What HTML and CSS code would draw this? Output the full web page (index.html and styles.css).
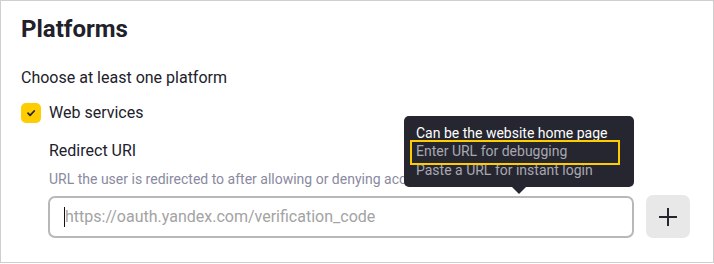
FILE: index.html
```html
<!DOCTYPE html>
<html lang="en">
<head>
<meta charset="utf-8">
<title>Platforms</title>
<link rel="stylesheet" href="styles.css">
</head>
<body>
<section class="panel">
  <h1 class="title">Platforms</h1>
  <p class="hint">Choose at least one platform</p>
  <label class="check">
    <span class="box">
      <svg width="12" height="12" viewBox="0 0 12 12"><path d="M3 6.2l2.1 2.1L9.2 4" fill="none" stroke="#262630" stroke-width="1.8" stroke-linecap="round" stroke-linejoin="round"/></svg>
    </span>
    <span class="check-label">Web services</span>
  </label>
  <div class="field">
    <div class="field-label">Redirect URI</div>
    <div class="field-desc">URL the user is redirected to after allowing or denying access</div>
    <div class="field-row">
      <div class="input"><span class="caret"></span><span class="placeholder">https://oauth.yandex.com/verification_code</span></div>
      <button class="add" type="button" aria-label="Add">
        <svg width="20" height="20" viewBox="0 0 20 20"><path d="M10 1v18M1 10h18" stroke="#262630" stroke-width="2"/></svg>
      </button>
    </div>
  </div>
  <div class="tooltip">
    <div class="tip-line tip-main">Can be the website home page</div>
    <div class="tip-line tip-sub tip-marked">Enter URL for debugging</div>
    <div class="tip-line tip-sub">Paste a URL for instant login</div>
  </div>
</section>
</body>
</html>
```

FILE: styles.css
```css
* { box-sizing: border-box; }
html, body { margin: 0; padding: 0; background: #fff; }
body { font-family: Roboto, "Noto Sans", sans-serif; color: #21212b; }

.panel {
  position: relative;
  width: 714px;
  height: 263px;
  border: 1px solid #cfcfcf;
  padding: 14px 20px 0 20px;
  overflow: hidden;
}
.title {
  margin: 0;
  font-size: 24px;
  line-height: 28px;
  font-weight: 700;
  color: #21212b;
}
.hint {
  margin: 25px 0 0 0;
  font-size: 16px;
  line-height: 20px;
  color: #21212b;
}
.check {
  display: flex;
  align-items: center;
  gap: 8px;
  margin-top: 15px;
  height: 20px;
}
.box {
  width: 20px;
  height: 20px;
  border-radius: 5px;
  background: #ffcc00;
  display: flex;
  align-items: center;
  justify-content: center;
}
.check-label { font-size: 16px; line-height: 20px; }

.field {
  margin-left: 27px;
  margin-top: 18px;
}
.field-label {
  padding-left: 1px;
  font-size: 16px;
  line-height: 20px;
}
.field-desc {
  padding-left: 1px;
  margin-top: 9px;
  font-size: 14px;
  line-height: 18px;
  color: #8a8aa0;
  white-space: nowrap;
}
.field-row {
  display: flex;
  align-items: center;
  gap: 12px;
  margin-top: 7px;
}
.input {
  width: 586px;
  height: 42px;
  border: 2px solid #b8b8b8;
  border-radius: 7px;
  display: flex;
  align-items: center;
  padding-left: 14px;
}
.caret {
  width: 1px;
  height: 20px;
  background: #111;
}
.placeholder {
  font-size: 16px;
  color: #a3a3a3;
}
.add {
  width: 44px;
  height: 43px;
  border: 0;
  border-radius: 7px;
  background: #e8e8e8;
  display: flex;
  align-items: center;
  justify-content: center;
  padding: 0;
}

.tooltip {
  position: absolute;
  left: 403px;
  top: 115px;
  width: 230px;
  height: 71px;
  background: #262630;
  border-radius: 5px;
  padding: 8px 6px 0 6px;
}
.tooltip::after {
  content: "";
  position: absolute;
  left: 108px;
  bottom: -7px;
  border-left: 7px solid transparent;
  border-right: 7px solid transparent;
  border-top: 7px solid #262630;
}
.tip-line {
  font-size: 14px;
  line-height: 18.4px;
  padding: 0 6px;
  white-space: nowrap;
}
.tip-main { color: #ffffff; }
.tip-sub { color: #a8a8b0; }
.tip-marked { position: relative; }
.tip-marked::before {
  content: "";
  position: absolute;
  left: 0;
  top: -2px;
  width: 206px;
  height: 21px;
  border: 2px solid #ffcc00;
}
```
